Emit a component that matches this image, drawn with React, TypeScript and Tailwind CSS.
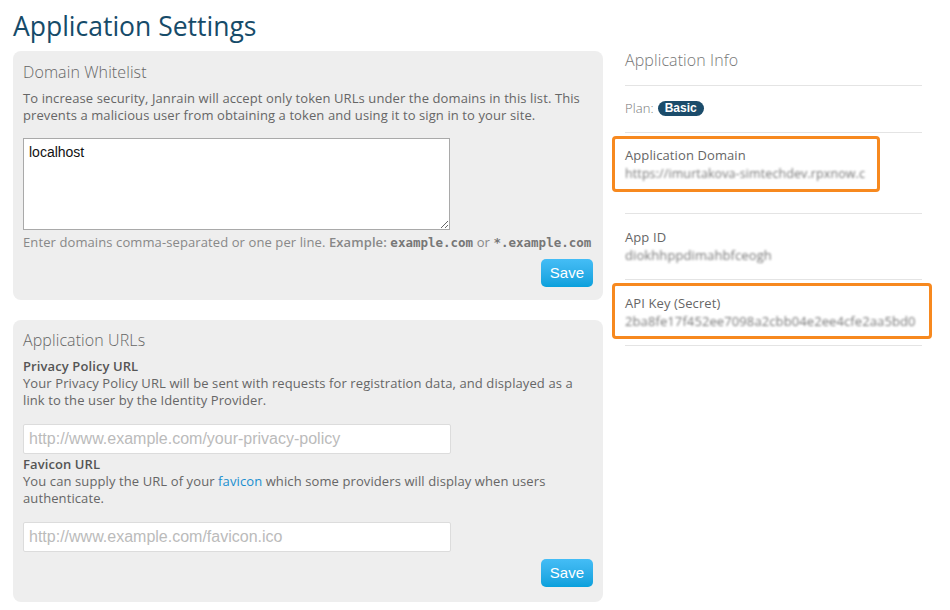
import React from 'react';

const font = { fontFamily: '"Open Sans", "Liberation Sans", sans-serif' };

function SaveButton() {
  return (
    <button className="h-[28px] w-[52px] rounded-[5px] text-white text-[15px] bg-gradient-to-b from-[#44bdf6] to-[#06a0dc] [font-family:'Liberation_Sans',Arial,sans-serif]">
      Save
    </button>
  );
}

function InfoItem({ label, value, box }: { label: string; value: string; box?: string }) {
  return (
    <div className="relative border-b border-[#e4e4e4] pt-[14px] pb-[14px]">
      {box && <div className={`absolute rounded-[4px] border-[3px] border-[#f7891f] ${box}`} />}
      <div className="text-[13px] text-[#666] leading-[18px]">{label}</div>
      <div className="text-[13px] text-[#777] leading-[19px] blur-[1.2px] whitespace-nowrap">{value}</div>
    </div>
  );
}

export default function App() {
  return (
    <div className="w-[950px] h-[610px] bg-white overflow-hidden pl-[13px] tracking-[0.1px]" style={font}>
      <h1 className="text-[26.5px] text-[#164b69] leading-[34px] pt-[9px] pb-[8px] tracking-normal">Application Settings</h1>
      <div className="flex gap-[22px]">
        <div className="w-[590px] flex flex-col gap-[20px]">
          <div className="bg-[#eeeeee] rounded-[8px] px-[10px] pt-[10px] pb-[13px]">
            <h2 className="text-[16px] font-light text-[#666] leading-[22px] mb-[7px]">Domain Whitelist</h2>
            <p className="text-[13px] text-[#666] leading-[17px]">
              To increase security, Janrain will accept only token URLs under the domains in this list. This prevents a malicious user from obtaining a token and using it to sign in to your site.
            </p>
            <textarea
              defaultValue="localhost"
              className="mt-[14px] block w-[427px] h-[92px] bg-white border border-[#a9a9a9] px-[5px] py-[5px] text-[14px] leading-[17px] tracking-normal text-[#111] [font-family:'Liberation_Sans',Arial,sans-serif] resize-y outline-none"
            />
            <p className="text-[13px] text-[#888] leading-[17px] mt-[4px] whitespace-nowrap">
              Enter domains comma-separated or one per line. <span className="font-semibold">Example:</span>{' '}
              <code className="font-bold text-[#777] [font-family:'DejaVu_Sans_Mono',monospace] text-[12.5px] tracking-normal">example.com</code> or{' '}
              <code className="font-bold text-[#777] [font-family:'DejaVu_Sans_Mono',monospace] text-[12.5px] tracking-normal">*.example.com</code>
            </p>
            <div className="flex justify-end mt-[8px]">
              <SaveButton />
            </div>
          </div>

          <div className="bg-[#eeeeee] rounded-[8px] px-[10px] pt-[9px] pb-[15px]">
            <h2 className="text-[16px] font-light text-[#666] leading-[22px] mb-[7px]">Application URLs</h2>
            <div className="text-[13px] font-semibold text-[#555] leading-[17px]">Privacy Policy URL</div>
            <p className="text-[13px] text-[#666] leading-[17px]">
              Your Privacy Policy URL will be sent with requests for registration data, and displayed as a link to the user by the Identity Provider.
            </p>
            <input
              placeholder="http://www.example.com/your-privacy-policy"
              className="mt-[15px] block w-[428px] h-[30px] bg-white border border-[#dcdcdc] rounded-[2px] px-[5px] text-[16px] tracking-normal placeholder:text-[#bbb] [font-family:'Liberation_Sans',Arial,sans-serif] outline-none"
            />
            <div className="text-[13px] font-semibold text-[#555] leading-[17px] mt-[2px]">Favicon URL</div>
            <p className="text-[13px] text-[#666] leading-[17px]">
              You can supply the URL of your <span className="text-[#1a8fd0]">favicon</span> which some providers will display when users authenticate.
            </p>
            <input
              placeholder="http://www.example.com/favicon.ico"
              className="mt-[15px] block w-[428px] h-[30px] bg-white border border-[#dcdcdc] rounded-[2px] px-[5px] text-[16px] tracking-normal placeholder:text-[#bbb] [font-family:'Liberation_Sans',Arial,sans-serif] outline-none"
            />
            <div className="flex justify-end mt-[7px]">
              <SaveButton />
            </div>
          </div>
        </div>

        <div className="w-[297px]">
          <div className="text-[16px] font-light text-[#777] leading-[22px] pb-[14px] border-b border-[#e4e4e4] -mt-[2px]">Application Info</div>
          <div className="border-b border-[#e4e4e4] pt-[13px] pb-[13px] flex items-center gap-[4px]">
            <span className="text-[13px] text-[#777] font-light">Plan:</span>
            <span className="bg-[#1b4c6b] text-white text-[12px] font-bold px-[7px] leading-[15px] rounded-full tracking-normal [font-family:'Liberation_Sans',Arial,sans-serif]">Basic</span>
          </div>
          <div className="relative border-b border-[#e4e4e4] pt-[13px] pb-[30px]">
            <div className="absolute rounded-[4px] border-[3px] border-[#f7891f] left-[-13px] top-[3px] w-[268px] h-[56px]" />
            <div className="text-[13px] text-[#666] leading-[18px]">Application Domain</div>
            <div className="text-[12.5px] text-[#777] leading-[19px] blur-[1.2px] whitespace-nowrap">https://imurtakova-simtechdev.rpxnow.c</div>
          </div>
          <InfoItem label="App ID" value="diokhhppdimahbfceogh" />
          <InfoItem label="API Key (Secret)" value="2ba8fe17f452ee7098a2cbb04e2ee4cfe2aa5bd0" box="left-[-13px] top-[3px] w-[320px] h-[56px]" />
        </div>
      </div>
    </div>
  );
}
